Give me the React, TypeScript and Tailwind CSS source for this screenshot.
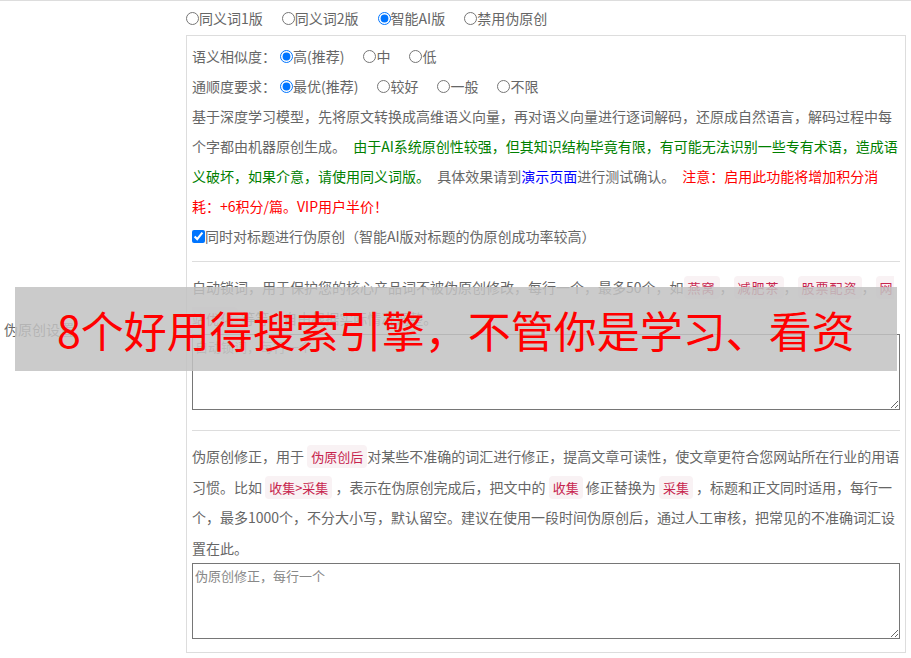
import { ReactNode } from "react";

function Code({ children, wide }: { children: ReactNode; wide?: boolean }) {
  return (
    <code
      className={
        "bg-[#f9f2f4] text-[#c7254e] px-1 py-[2px] rounded text-[13px] leading-[18px] font-['Noto_Sans_CJK_SC',sans-serif] " +
        (wide ? "tracking-[1px]" : "")
      }
    >
      {children}
    </code>
  );
}

function Radio({
  name,
  label,
  checked,
  last,
}: {
  name: string;
  label: string;
  checked?: boolean;
  last?: boolean;
}) {
  return (
    <label className={"flex items-center " + (last ? "" : "mr-[19px]")}>
      <input
        type="radio"
        name={name}
        defaultChecked={checked}
        className="m-0 w-[13px] h-[13px]"
      />
      <span>{label}</span>
    </label>
  );
}

export default function App() {
  return (
    <div className="relative w-[911px] min-h-[658px] bg-white border-t border-[#ddd] flex text-[14px] text-[#666] font-['Noto_Sans_CJK_SC',sans-serif]">
      <div className="w-[186px] flex items-center pl-1">伪原创设置</div>

      <div className="w-[720px]">
        <div className="h-[34px] flex items-center">
          <Radio name="mode" label="同义词1版" />
          <Radio name="mode" label="同义词2版" />
          <Radio name="mode" label="智能AI版" checked />
          <Radio name="mode" label="禁用伪原创" last />
        </div>

        <div className="border border-[#ddd] p-[5px]">
          <div className="h-[30px] flex items-center">
            <span className="mr-1">语义相似度：</span>
            <Radio name="sim" label="高(推荐)" checked />
            <Radio name="sim" label="中" />
            <Radio name="sim" label="低" last />
          </div>
          <div className="h-[30px] flex items-center">
            <span className="mr-1">通顺度要求：</span>
            <Radio name="flu" label="最优(推荐)" checked />
            <Radio name="flu" label="较好" />
            <Radio name="flu" label="一般" />
            <Radio name="flu" label="不限" last />
          </div>
          <p className="leading-[30px] [word-spacing:4px]">
            基于深度学习模型，先将原文转换成高维语义向量，再对语义向量进行逐词解码，还原成自然语言，解码过程中每个字都由机器原创生成。{" "}
            <span className="text-[#008000]">
              由于AI系统原创性较强，但其知识结构毕竟有限，有可能无法识别一些专有术语，造成语义破坏，如果介意，请使用同义词版。
            </span>{" "}
            具体效果请到<a className="text-[#0000ff]">演示页面</a>进行测试确认。{" "}
            <span className="text-[#ff0000]">
              注意：启用此功能将增加积分消耗：+6积分/篇。VIP用户半价！
            </span>
          </p>
          <label className="h-[30px] flex items-center">
            <input type="checkbox" defaultChecked className="m-0 w-[13px] h-[13px]" />
            <span>同时对标题进行伪原创（智能AI版对标题的伪原创成功率较高）</span>
          </label>

          <div className="border-t border-[#ddd] mt-[10px] mb-[10px]" />

          <p className="leading-[30.5px]">
            自动锁词，用于保护您的核心产品词不被伪原创修改，每行一个，最多50个，如<Code wide>燕窝</Code>，<Code wide>减肥茶</Code>，<Code wide>股票配资</Code>，<Code wide>网站优化</Code> 等等，自由根据实际情况调整。
          </p>
          <textarea
            placeholder="自动锁词，每行一个"
            className="block mt-[1px] w-full h-[76px] border border-[#767676] px-[2px] py-[2px] text-[13px] leading-[20px] placeholder:text-[#888] font-['Noto_Sans_CJK_SC',sans-serif]"
          />

          <div className="border-t border-[#ddd] mt-[20px] mb-[10px]" />

          <p className="leading-[30.5px]">
            伪原创修正，用于 <Code>伪原创后</Code>对某些不准确的词汇进行修正，提高文章可读性，使文章更符合您网站所在行业的用语习惯。比如 <Code>收集&gt;采集</Code> ，表示在伪原创完成后，把文中的 <Code>收集</Code> 修正替换为 <Code>采集</Code> ，标题和正文同时适用，每行一个，最多1000个，不分大小写，默认留空。建议在使用一段时间伪原创后，通过人工审核，把常见的不准确词汇设置在此。
          </p>
          <textarea
            placeholder="伪原创修正，每行一个"
            className="block w-full h-[76px] border border-[#767676] px-[2px] py-[2px] mb-[8px] text-[13px] leading-[20px] placeholder:text-[#888] font-['Noto_Sans_CJK_SC',sans-serif]"
          />
        </div>
      </div>

      <div className="absolute left-[15px] top-[286px] w-[882px] h-[84px] bg-[rgba(194,194,194,0.85)] flex items-center pl-[42px] text-[43px] leading-none text-[#ff0000] font-['Noto_Sans_CJK_SC',sans-serif]">
        8个好用得搜索引擎，不管你是学习、看资
      </div>
    </div>
  );
}
